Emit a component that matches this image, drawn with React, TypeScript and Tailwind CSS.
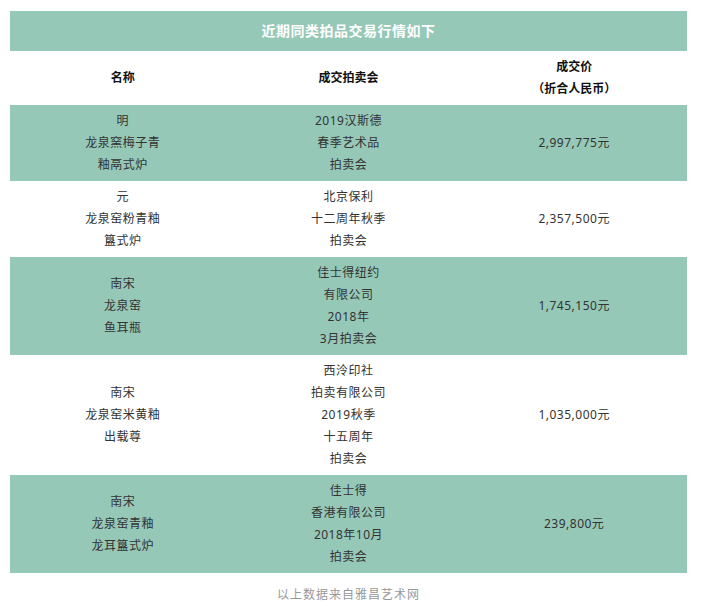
import React from "react";

type Row = { name: string[]; auction: string[]; price: string; shaded: boolean };

const rows: Row[] = [
  { name: ["明", "龙泉窯梅子青", "釉鬲式炉"], auction: ["2019汉斯德", "春季艺术品", "拍卖会"], price: "2,997,775元", shaded: true },
  { name: ["元", "龙泉窑粉青釉", "簋式炉"], auction: ["北京保利", "十二周年秋季", "拍卖会"], price: "2,357,500元", shaded: false },
  { name: ["南宋", "龙泉窑", "鱼耳瓶"], auction: ["佳士得纽约", "有限公司", "2018年", "3月拍卖会"], price: "1,745,150元", shaded: true },
  { name: ["南宋", "龙泉窑米黄釉", "出载尊"], auction: ["西泠印社", "拍卖有限公司", "2019秋季", "十五周年", "拍卖会"], price: "1,035,000元", shaded: false },
  { name: ["南宋", "龙泉窑青釉", "龙耳簋式炉"], auction: ["佳士得", "香港有限公司", "2018年10月", "拍卖会"], price: "239,800元", shaded: true },
];

function Cell({ lines, bold }: { lines: string[]; bold?: boolean }) {
  return (
    <div className="flex flex-col items-center justify-center py-[5px] text-center">
      {lines.map((l, i) => (
        <div key={i} className={bold ? "font-bold text-[#111]" : ""}>
          {l}
        </div>
      ))}
    </div>
  );
}

export default function App() {
  return (
    <div
      className="bg-white w-[701px] h-[607px] pt-[11px] text-[12px] leading-[22px] text-[#333]"
      style={{ fontFamily: '"Noto Sans", "Noto Sans CJK SC", sans-serif' }}
    >
      <div className="ml-[10px] w-[677px]">
        <div className="h-[40px] bg-[#96c8b8] flex items-center justify-center text-white font-bold text-[14px] tracking-[0.5px]">
          近期同类拍品交易行情如下
        </div>
        <div className="grid grid-cols-3 bg-white">
          <Cell lines={["名称"]} bold />
          <Cell lines={["成交拍卖会"]} bold />
          <Cell lines={["成交价", "（折合人民币）"]} bold />
        </div>
        {rows.map((r, i) => (
          <div
            key={i}
            className={`grid grid-cols-3 tracking-[0.5px] ${r.shaded ? "bg-[#96c8b8]" : "bg-white"}`}
          >
            <Cell lines={r.name} />
            <Cell lines={r.auction} />
            <Cell lines={[r.price]} />
          </div>
        ))}
        <div className="mt-[11px] text-center text-[#999] tracking-[1px]">以上数据来自雅昌艺术网</div>
      </div>
    </div>
  );
}
